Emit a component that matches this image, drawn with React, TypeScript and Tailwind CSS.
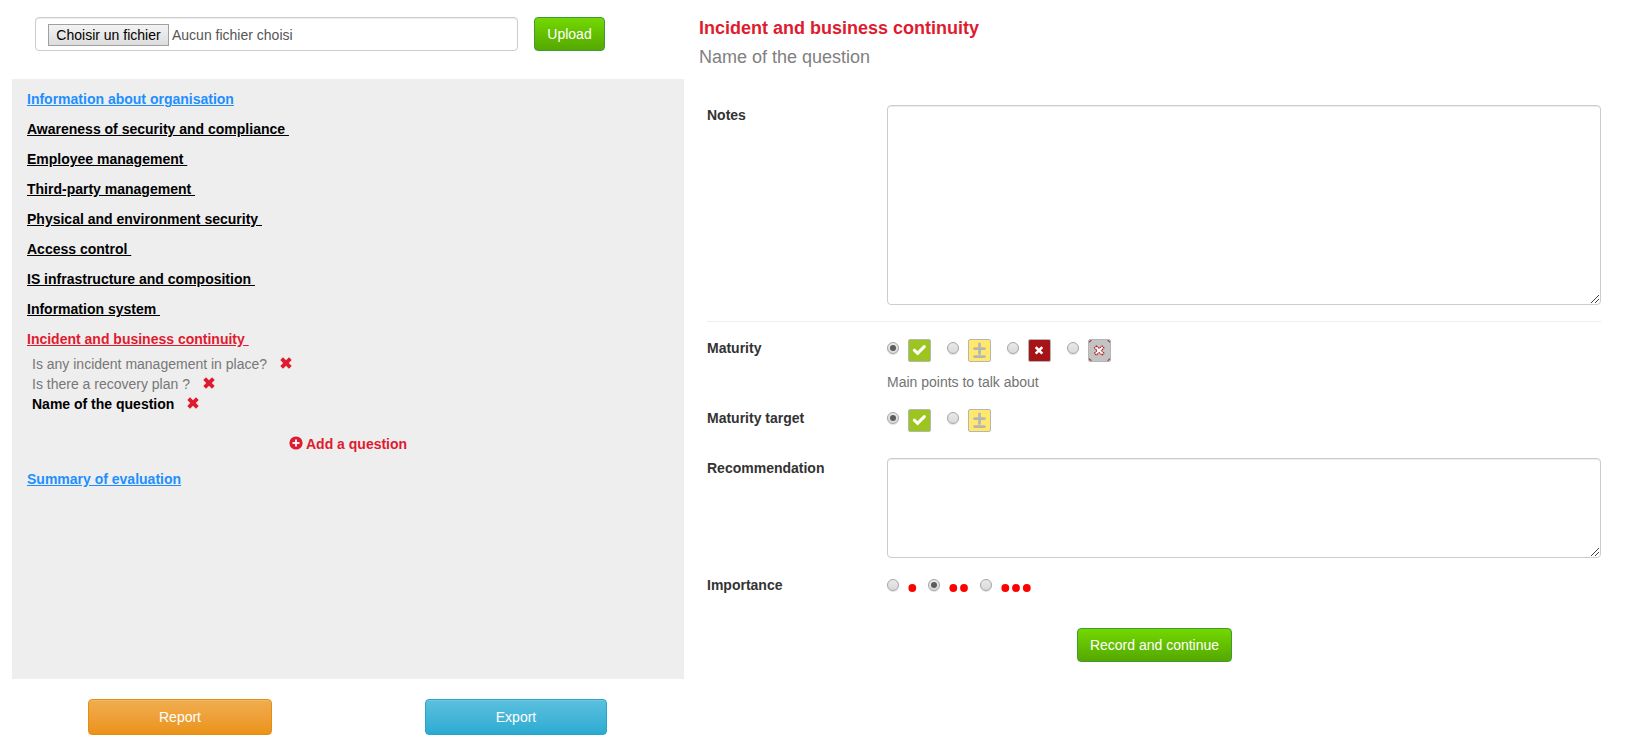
import React from 'react';

const sections = [
  'Awareness of security and compliance',
  'Employee management',
  'Third-party management',
  'Physical and environment security',
  'Access control',
  'IS infrastructure and composition',
  'Information system',
];

function Cross() {
  return (
    <svg className="-mt-[2px] h-[12px] w-[12px]" viewBox="0 0 12 12">
      <path d="M3 .3 6 3.3 9 .3 11.7 3 8.8 6 11.7 9 9 11.7 6 8.7 3 11.7 .3 9 3.2 6 .3 3Z" fill="#df1b2f" />
    </svg>
  );
}

function Radio({ checked = false }: { checked?: boolean }) {
  return (
    <span className="flex h-[12px] w-[12px] shrink-0 items-center justify-center rounded-full border border-[#a5a5a5] bg-linear-to-b from-[#e9e9e9] to-[#dadada] shadow-[0_1px_1px_rgba(0,0,0,0.12)]">
      {checked && <span className="h-[6px] w-[6px] rounded-full bg-[#5c5c5c]" />}
    </span>
  );
}

type Kind = 'yes' | 'partial' | 'no' | 'na';

function Level({ kind }: { kind: Kind }) {
  return (
    <svg className="h-[23px] w-[23px]" viewBox="0 0 23 23">
      {kind === 'yes' && (
        <>
          <rect x=".5" y=".5" width="22" height="22" rx="1.5" fill="#9dc520" stroke="#b5b5b5" />
          <path d="M6.3 11.2 9.6 14.3 16.3 7.6" fill="none" stroke="#fff" strokeWidth="3" strokeLinecap="round" />
        </>
      )}
      {kind === 'partial' && (
        <>
          <rect x=".5" y=".5" width="22" height="22" rx="1.5" fill="#ffe86b" stroke="#b5b5b5" />
          <path d="M11.5 5V14.5M6.6 9.7H16.4M6.6 17.6H16.4" fill="none" stroke="#b5b5b5" strokeWidth="2.8" strokeLinecap="round" />
        </>
      )}
      {kind === 'no' && (
        <>
          <rect x=".5" y=".5" width="22" height="22" rx="1.5" fill="#a61417" stroke="#b5b5b5" />
          <path d="M7.7 8.1 14.3 14.7M14.3 8.1 7.7 14.7" fill="none" stroke="#fff" strokeWidth="2.6" />
        </>
      )}
      {kind === 'na' && (
        <>
          <rect x=".5" y=".5" width="22" height="22" rx="1.5" fill="#c3c3c3" stroke="#b5b5b5" />
          <path d="M1 3H2V2H3V1M20 1V2H21V3H22M22 20H21V21H20V22M3 22V21H2V20H1" fill="none" stroke="#a61417" strokeWidth=".8" />
          <path d="M8.2 7 11.2 9.4 14.2 7 15.9 8.8 13.4 11.5 15.9 14.2 14.2 16 11.2 13.6 8.2 16 6.5 14.2 9 11.5 6.5 8.8Z" fill="#fff" stroke="#b3161a" strokeWidth="1.1" strokeDasharray="1.6 .7" />
        </>
      )}
    </svg>
  );
}

function Levels({ kinds }: { kinds: Kind[] }) {
  return (
    <div className="flex gap-[16px]">
      {kinds.map((k, i) => (
        <span key={k} className="flex w-[44px] items-start justify-between">
          <span className="pt-[3px]"><Radio checked={i === 0} /></span>
          <Level kind={k} />
        </span>
      ))}
    </div>
  );
}

function Dots({ count, checked = false, width }: { count: number; checked?: boolean; width: string }) {
  return (
    <span className={`flex items-start ${width}`}>
      <Radio checked={checked} />
      <svg className="mt-[5px] ml-[9px] h-[8px] w-[32px] shrink-0" viewBox="0 0 32 8">
        {[4.3, 15, 25.8].slice(0, count).map((cx) => (
          <circle key={cx} cx={cx} cy="4" r="3.9" fill="#ff0000" />
        ))}
      </svg>
    </span>
  );
}

function Area({ size }: { size: string }) {
  return (
    <div className={`flex w-[714px] items-end justify-end rounded-[4px] border border-[#cccccc] p-px shadow-[inset_0_1px_1px_rgba(0,0,0,0.075)] ${size}`}>
      <svg className="h-[8px] w-[8px]" viewBox="0 0 8 8">
        <path d="M0 8 8 0M4 8 8 4" stroke="#444" strokeWidth="1" fill="none" />
      </svg>
    </div>
  );
}

const label = 'w-[180px] shrink-0 font-bold text-[#333333]';
const green =
  'flex h-[34px] items-center justify-center rounded-[4px] border border-[#3d9a34] bg-linear-to-b from-[#73d800] to-[#55a800] text-white';

export default function App() {
  return (
    <div className="flex h-[749px] w-[1639px] overflow-hidden bg-white font-['Liberation_Sans',Arial,sans-serif] text-[14px] leading-[20px] whitespace-nowrap text-black">
      <div className="ml-[12px] w-[672px] shrink-0">
        <div className="flex h-[79px] items-start pt-[17px] pl-[23px]">
          <div className="flex h-[34px] w-[483px] items-center rounded-[4px] border border-[#cccccc] pl-[12px] text-[#555555] shadow-[inset_0_1px_1px_rgba(0,0,0,0.075)]">
            <span className="mt-[2px] mr-[3px] flex h-[22px] w-[121px] items-center justify-center border border-[#a0a0a0] bg-linear-to-b from-[#f3f3f3] to-[#dddddd] text-black">
              Choisir un fichier
            </span>
            <span className="mt-[2px]">Aucun fichier choisi</span>
          </div>
          <button className={`ml-[16px] w-[71px] ${green}`}>Upload</button>
        </div>
        <div className="h-[600px] bg-[#eeeeee] pt-[10px] pl-[15px]">
          <div className="font-bold">
            <div className="h-[30px] text-[#1e8fff] underline">Information about organisation</div>
            {sections.map((name) => (
              <div key={name} className="h-[30px] underline">{name + '\u00a0'}</div>
            ))}
            <div className="h-[25px] text-[#df1b2f] underline">{'Incident and business continuity\u00a0'}</div>
          </div>
          <div className="pl-[5px]">
            <div className="flex h-[20px] items-center gap-[13px] text-[#777777]"><span>Is any incident management in place?</span><Cross /></div>
            <div className="flex h-[20px] items-center gap-[13px] text-[#777777]"><span>Is there a recovery plan ?</span><Cross /></div>
            <div className="flex h-[20px] items-center gap-[13px] font-bold"><span>Name of the question</span><Cross /></div>
          </div>
          <div className="mt-[20px] flex h-[20px] items-center gap-[3px] pl-[262px] font-bold text-[#df1b2f]">
            <svg className="-mt-[2px] h-[14px] w-[14px]" viewBox="0 0 14 14">
              <circle cx="7" cy="7" r="6.6" fill="#df1b2f" />
              <path d="M7 3.5V10.5M3.5 7H10.5" stroke="#eee" strokeWidth="2" />
            </svg>
            <span>Add a question</span>
          </div>
          <div className="mt-[15px] font-bold text-[#1e8fff] underline">Summary of evaluation</div>
        </div>
        <div className="flex pt-[20px] pl-[76px]">
          <button className="h-[36px] w-[184px] rounded-[4px] border border-[#e38d13] bg-linear-to-b from-[#f0ad4e] to-[#eb9316] text-white shadow-[inset_0_1px_0_rgba(255,255,255,0.15)]">Report</button>
          <button className="ml-[153px] h-[36px] w-[182px] rounded-[4px] border border-[#28a4c9] bg-linear-to-b from-[#5bc0de] to-[#2aabd2] text-white shadow-[inset_0_1px_0_rgba(255,255,255,0.15)]">Export</button>
        </div>
      </div>

      <div className="ml-[15px] w-[902px] pt-[18px]">
        <div className="h-[29px] text-[18px] font-bold text-[#df1b2f]">Incident and business continuity</div>
        <div className="h-[58px] text-[18px] text-[#808080]">Name of the question</div>
        <div className="pl-[8px]">
          <div className="flex h-[216px] items-start">
            <div className={label}>Notes</div>
            <Area size="h-[200px]" />
          </div>
          <div className="h-px bg-[#eeeeee]" />
          <div className="flex h-[70px] items-start pt-[17px]">
            <div className={`-mt-px ${label}`}>Maturity</div>
            <div>
              <Levels kinds={['yes', 'partial', 'no', 'na']} />
              <div className="mt-[10px] text-[#737373]">Main points to talk about</div>
            </div>
          </div>
          <div className="flex h-[66px] items-start pt-[17px]">
            <div className={`-mt-px ${label}`}>Maturity target</div>
            <Levels kinds={['yes', 'partial']} />
          </div>
          <div className="flex h-[117px] items-start">
            <div className={label}>Recommendation</div>
            <Area size="h-[100px]" />
          </div>
          <div className="flex h-[53px] items-start">
            <div className={label}>Importance</div>
            <div className="flex pt-[4px]">
              <Dots count={1} width="w-[41px]" />
              <Dots count={2} width="w-[52px]" checked />
              <Dots count={3} width="w-[53px]" />
            </div>
          </div>
          <button className={`ml-[370px] w-[155px] ${green}`}>Record and continue</button>
        </div>
      </div>
    </div>
  );
}
